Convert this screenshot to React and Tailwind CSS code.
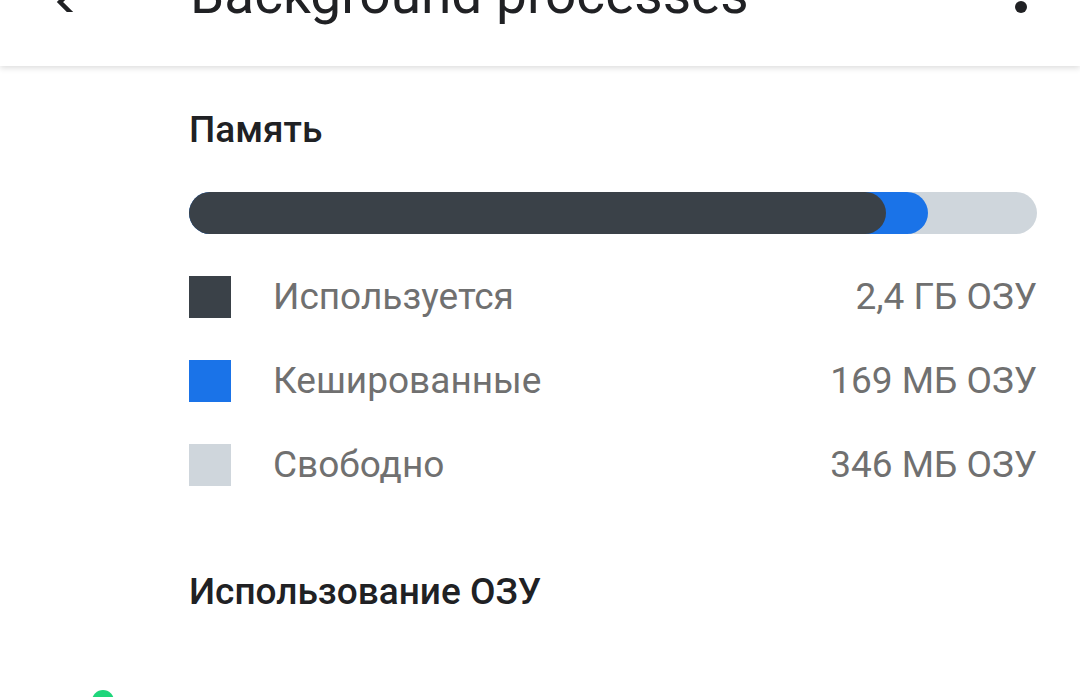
import { useState } from 'react';

const legend = [
  { label: 'Используется', value: '2,4 ГБ ОЗУ', color: 'bg-[#3a4148]' },
  { label: 'Кешированные', value: '169 МБ ОЗУ', color: 'bg-[#1a73e8]' },
  { label: 'Свободно', value: '346 МБ ОЗУ', color: 'bg-[#cfd6dc]' }
];

export default function App() {
  const [used] = useState(82.2);
  const [cached] = useState(87.1);

  return (
    <div className="relative h-[697px] w-[1080px] overflow-hidden bg-white font-['Roboto',sans-serif]">
      <header className="relative z-10 flex h-[66px] items-start bg-white shadow-[0_2px_6px_rgba(0,0,0,0.14)]">
        <div className="ml-[52px] mt-[-16px] h-[28px] w-[28px]">
          <svg viewBox="0 0 28 28" className="h-full w-full">
            <path d="M24 2 L8 18 L24 34" fill="none" stroke="#202124" strokeWidth="4.5" strokeLinecap="square" />
          </svg>
        </div>
        <h1 className="ml-[110px] mt-[-33px] text-[55px] leading-[55px] text-[#202124]">
          Background processes
        </h1>
        <div className="ml-auto mr-[53px] mt-[1px] h-[12px] w-[12px] rounded-full bg-[#202124]" />
      </header>

      <main className="px-[189px] pr-[43px]">
        <h2 className="mt-[44px] text-[37px] font-medium leading-[40px] text-[#202124]">Память</h2>

        <div className="relative mt-[42px] h-[42px] w-full rounded-full bg-[#cfd6dc]">
          <div className="absolute left-0 top-0 h-full rounded-full bg-[#1a73e8]" style={{ width: `${cached}%` }} />
          <div className="absolute left-0 top-0 h-full rounded-full bg-[#3a4148]" style={{ width: `${used}%` }} />
        </div>

        <ul className="mt-[42px] flex flex-col gap-[42px]">
          {legend.map((item) => (
            <li key={item.label} className="flex h-[42px] items-center">
              <span className={`h-[42px] w-[42px] shrink-0 ${item.color}`} />
              <span className="ml-[42px] text-[37px] text-[#707070]">{item.label}</span>
              <span className="ml-auto text-[37px] text-[#707070]">{item.value}</span>
            </li>
          ))}
        </ul>

        <h2 className="mt-[86px] text-[37px] font-medium leading-[40px] text-[#202124]">Использование ОЗУ</h2>
      </main>

      <div className="absolute left-[92px] top-[690px] h-[22px] w-[22px] rounded-full bg-[#1ed67b]" />
    </div>
  );
}
